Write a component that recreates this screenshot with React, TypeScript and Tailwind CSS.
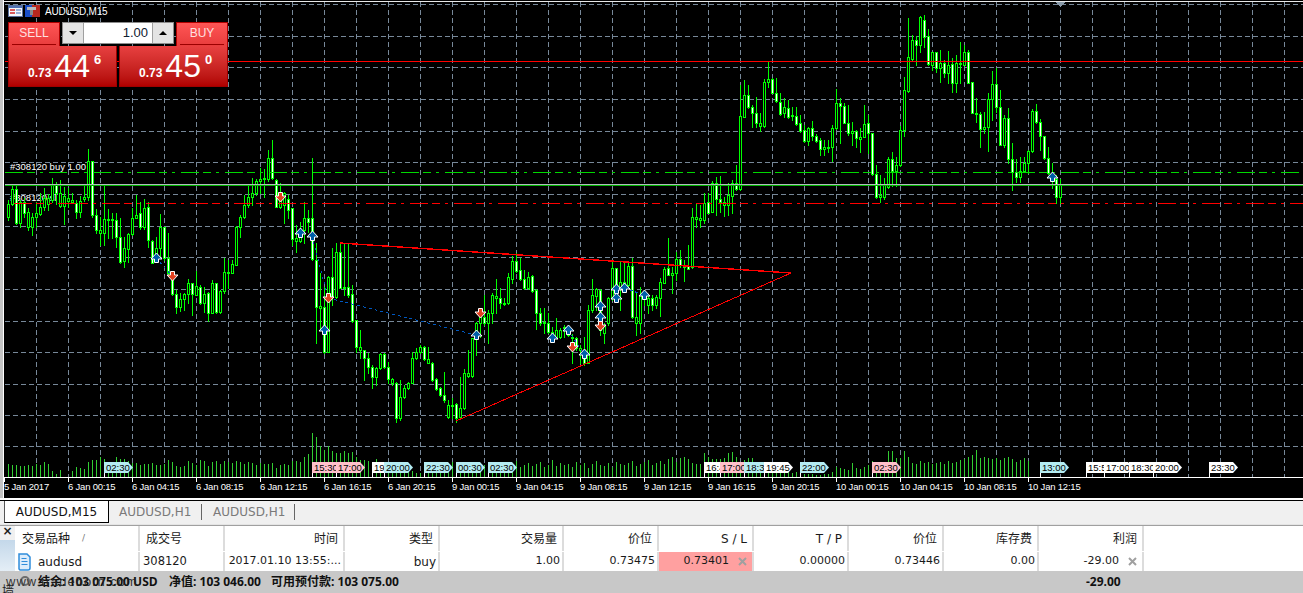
const bars: number[][] = [
  [200,204,217,220,0],[185,189,204,205,0],[185,189,223,224,1],[200,202,223,227,0],[198,202,213,217,1],[208,212,227,230,0],[213,217,227,235,0],[202,213,217,227,0],
  [193,207,214,215,0],[188,198,207,210,0],[194,198,204,210,0],[178,185,200,202,0],[182,185,193,204,1],[180,193,206,207,0],[187,196,206,224,0],[188,198,201,207,0],
  [193,200,202,203,0],[200,203,212,218,1],[196,201,212,217,0],[185,197,199,201,0],[149,161,197,200,0],[161,161,215,217,1],[209,215,230,233,1],[217,230,233,245,0],
  [186,219,233,245,0],[209,219,220,238,0],[213,219,220,238,0],[213,220,237,247,1],[218,237,262,263,1],[237,248,261,267,0],[233,234,249,262,0],[208,218,234,235,0],
  [195,215,218,218,0],[202,213,227,229,1],[199,208,227,229,0],[202,207,240,247,1],[240,241,263,263,1],[237,248,258,260,0],[214,227,248,258,0],[227,227,258,260,1],
  [233,258,273,274,1],[273,278,294,295,1],[290,294,307,313,1],[293,299,307,311,0],[293,294,299,310,0],[279,283,294,303,0],[283,283,294,315,1],[271,286,295,295,0],
  [285,287,303,304,1],[287,294,303,312,0],[292,293,313,321,1],[280,283,313,313,0],[283,283,312,313,1],[290,291,312,313,0],[258,272,291,293,0],[260,272,273,288,0],
  [260,264,273,273,0],[226,227,265,265,0],[215,217,227,237,0],[195,205,217,218,0],[185,197,205,207,0],[178,193,197,205,0],[179,181,193,195,0],[168,179,181,193,0],
  [169,178,179,197,0],[150,158,179,181,0],[140,158,178,179,1],[179,180,207,207,1],[183,198,207,208,0],[192,193,205,223,0],[195,199,210,218,1],[208,208,239,245,1],
  [225,238,241,252,0],[222,230,241,242,0],[202,218,230,243,0],[210,218,222,232,1],[158,218,259,260,1],[243,260,307,343,1],[273,306,308,330,0],[287,307,352,353,1],
  [276,277,352,352,0],[248,277,297,305,1],[243,252,297,298,0],[243,252,288,288,1],[243,287,288,295,0],[244,287,295,297,1],[285,294,321,322,1],[320,320,347,352,1],
  [330,347,350,358,0],[350,350,358,380,1],[353,358,367,373,1],[365,367,377,388,1],[367,368,377,385,0],[353,354,368,369,0],[353,354,367,368,1],[362,367,379,383,1],
  [378,379,383,385,0],[382,383,418,422,1],[380,397,418,420,0],[385,388,397,398,0],[382,383,388,389,0],[352,358,383,383,0],[348,352,358,359,0],[345,347,352,353,0],
  [346,347,359,360,1],[347,359,363,363,0],[362,363,380,381,1],[378,379,389,390,1],[387,388,395,396,1],[372,395,400,402,1],[400,405,417,418,0],[398,405,406,418,0],
  [403,404,418,422,1],[377,408,417,418,0],[369,373,408,409,0],[350,373,376,377,0],[338,338,376,377,0],[322,323,338,355,0],[310,317,323,337,0],[295,317,323,325,1],
  [310,313,323,343,0],[293,295,313,323,0],[279,296,298,313,0],[288,298,303,308,1],[298,303,304,305,0],[273,277,303,304,0],[256,261,279,283,0],[253,261,271,272,1],
  [258,270,279,280,1],[270,279,288,289,1],[272,277,288,289,0],[275,276,291,292,1],[289,290,313,329,1],[308,313,323,325,1],[308,322,323,333,0],[313,323,332,333,1],
  [327,332,333,342,0],[318,330,337,338,0],[328,330,337,338,0],[325,327,328,337,0],[327,327,335,336,1],[334,337,338,363,0],[337,338,348,350,1],[345,348,350,363,0],
  [337,350,363,365,1],[305,310,363,363,0],[279,295,310,312,0],[288,289,296,310,0],[289,290,330,335,1],[323,325,333,343,0],[297,298,323,325,0],[260,268,298,300,0],
  [268,268,287,302,1],[262,282,287,310,0],[262,282,287,290,1],[262,266,285,287,0],[258,266,317,318,1],[292,317,323,335,0],[287,295,323,333,0],[290,295,298,305,1],
  [295,298,305,313,0],[295,298,305,310,1],[295,297,305,308,0],[278,282,298,316,0],[267,269,283,283,0],[238,268,275,275,1],[267,273,275,293,0],[252,259,273,280,0],
  [250,259,265,267,1],[260,265,267,281,0],[245,266,269,268,1],[208,217,267,268,0],[204,217,219,227,0],[205,218,220,227,0],[193,203,220,223,0],[193,202,213,213,1],
  [181,183,212,212,0],[177,183,199,215,1],[176,199,202,212,1],[197,202,205,216,0],[183,195,205,215,0],[180,183,196,213,0],[165,183,189,190,1],[85,116,189,190,0],
  [80,95,117,117,0],[85,95,107,108,1],[105,107,113,127,1],[97,113,123,127,1],[113,123,126,131,0],[79,82,126,127,0],[62,79,82,87,0],[78,79,93,93,1],
  [78,93,101,102,1],[93,102,114,115,1],[98,107,113,117,0],[100,108,117,118,1],[107,115,116,120,0],[107,116,124,125,1],[115,123,131,132,1],[125,130,141,142,1],
  [127,128,141,145,0],[121,128,136,140,1],[134,136,141,142,1],[138,140,149,155,1],[140,147,149,155,0],[140,147,148,152,0],[125,128,147,161,0],[89,103,128,129,0],
  [98,103,106,143,1],[103,106,123,123,1],[105,123,133,135,1],[122,131,133,145,0],[130,131,138,147,1],[128,137,139,152,0],[105,124,137,137,0],[115,123,133,153,1],
  [133,133,174,175,1],[165,174,197,198,1],[175,195,197,202,0],[178,185,197,199,0],[157,159,187,188,0],[152,159,171,186,1],[157,165,171,186,0],[126,130,165,166,0],
  [77,90,130,136,0],[18,57,91,92,0],[35,40,59,60,0],[36,40,45,65,1],[16,17,45,52,0],[15,20,37,47,1],[29,36,64,65,1],[52,52,65,70,0],
  [52,52,68,72,1],[50,63,68,82,0],[60,63,73,77,1],[51,65,73,83,0],[58,64,83,92,1],[55,63,83,92,0],[42,63,64,83,0],[45,52,65,65,0],
  [50,52,83,83,1],[82,82,113,113,1],[98,113,114,122,0],[112,114,129,147,1],[112,127,129,133,0],[93,99,127,151,0],[71,84,99,120,0],[68,84,107,112,1],
  [90,107,145,145,1],[115,118,145,147,0],[108,118,159,163,1],[143,159,172,190,1],[159,172,177,182,1],[157,171,177,182,0],[157,163,171,172,0],[150,151,163,173,0],
  [109,111,151,152,0],[104,111,122,123,1],[119,122,136,150,1],[136,136,158,159,1],[147,158,173,174,1],[163,174,180,188,1],[175,179,197,203,1],[179,185,197,203,0],
]

const vols = [
  13,12,12,11,11,12,11,13,12,15,13,6,3,7,0,0,6,10,9,8,15,17,17,20,18,14,13,20,18,18,16,14,14,12,13,13,14,12,12,13,17,15,11,10,11,16,14,12,17,16,11,15,16,13,16,15,14,16,15,13,15,14,12,14,13,13,14,9,12,13,12,16,16,15,20,23,44,40,31,27,31,26,24,24,26,24,25,20,17,17,16,14,
  18,8,10,6,6,5,5,7,9,6,4,4,13,12,14,10,13,11,12,15,9,13,12,10,14,11,13,12,9,15,11,14,10,13,12,16,10,12,14,11,13,15,10,12,17,11,14,12,13,10,15,12,14,9,13,16,12,11,14,10,15,13,12,14,16,11,13,15,17,12,14,16,13,18,
  20,15,19,20,18,14,13,13,24,20,18,18,18,19,24,25,20,15,17,19,19,15,14,13,10,8,6,5,6,5,4,5,4,3,3,3,2,2,3,3,5,10,9,8,7,14,9,8,10,12,16,12,9,9,26,26,19,19,26,20,14,13,16,14,15,13,14,15,13,16,14,15,17,18,20,22,27,19,20,19,18,19,17,19,20,18,15,17,19,16,
]

const gridY = [4, 36, 67, 99, 131, 162, 194, 226, 257, 289, 321, 352, 384, 415, 446]
const gridX = Array.from({ length: 40 }, (_, i) => 36 + i * 32)

const axisLabels = [
  ['5 Jan 2017', 4], ['6 Jan 00:15', 68], ['6 Jan 04:15', 132], ['6 Jan 08:15', 196], ['6 Jan 12:15', 260], ['6 Jan 16:15', 324], ['6 Jan 20:15', 388],
  ['9 Jan 00:15', 452], ['9 Jan 04:15', 516], ['9 Jan 08:15', 580], ['9 Jan 12:15', 644], ['9 Jan 16:15', 708], ['9 Jan 20:15', 772],
  ['10 Jan 00:15', 836], ['10 Jan 04:15', 900], ['10 Jan 08:15', 964], ['10 Jan 12:15', 1028],
] as const

const CYAN = '#b4ecf2'
const PINK = '#ffc0cb'
const WHITE = '#ffffff'
const timeTags = [
  ['02:30', 104, CYAN], ['15:30', 312, PINK], ['17:00', 336, PINK], ['19:45', 372, WHITE], ['20:00', 384, CYAN], ['22:30', 424, CYAN], ['00:30', 456, CYAN], ['02:30', 488, CYAN],
  ['16:45', 704, WHITE], ['17:00', 720, PINK], ['18:30', 744, CYAN], ['19:45', 764, WHITE], ['22:00', 800, CYAN], ['02:30', 872, PINK], ['13:00', 1040, CYAN],
  ['15:55', 1086, WHITE], ['17:00', 1104, WHITE], ['18:30', 1129, WHITE], ['20:00', 1153, WHITE], ['23:30', 1209, WHITE],
] as const

const upMarks = [[156, 258], [300, 233], [312, 236], [324, 330], [476, 335], [552, 338], [568, 330], [584, 354], [600, 306], [600, 317], [616, 289], [616, 298], [624, 288], [644, 295], [1052, 177]]
const downMarks = [[172, 276], [280, 197], [328, 298], [480, 313], [572, 347], [600, 326]]

const dash = '18 4 8 5 3 6'
const chartFont = '"Liberation Sans", sans-serif'

function Chart() {
  return (
    <svg width="1299" height="498" viewBox="4 0 1299 498" className="block bg-black" shapeRendering="crispEdges">
      <rect x="4" y="1" width="1299" height="1" fill="#e8e8e8" />
      {gridY.map(y => (
        <line key={y} x1="5" x2="1303" y1={y + 0.5} y2={y + 0.5} stroke="#778899" strokeDasharray="5 3" />
      ))}
      {gridX.map(x => (
        <line key={x} x1={x + 0.5} x2={x + 0.5} y1="2" y2="477" stroke="#778899" strokeDasharray="5 3" />
      ))}
      <polygon points="1056,2 1065,2 1060.5,7" fill="#8899a8" />

      <text x="10" y="170" fill="#fff" fontSize="9.5" fontFamily={chartFont}>#308120 buy 1.00</text>
      <text x="10" y="201" fill="#fff" fontSize="9.5" fontFamily={chartFont}>#308120 sl</text>

      {vols.map((v, i) => (
        <rect key={i} x={8 + i * 4} y={477 - v} width="1" height={v} fill="#32cd32" />
      ))}

      {bars.map(([h, t, b, l, w], i) => {
        const x = 8 + i * 4
        return (
          <g key={i}>
            <rect x={x} y={h} width="1" height={l - h + 1} fill="#00ff00" />
            <rect x={x - 1} y={t} width="3" height={Math.max(b - t + 1, 2)} fill="#00ff00" />
            {b - t > 1 && <rect x={x} y={t + 1} width="1" height={b - t - 1} fill={w ? '#ffffff' : '#000000'} />}
          </g>
        )
      })}

      <rect x="5" y="61" width="1298" height="1" fill="#ff0000" />
      <line x1="5" x2="1303" y1="172.5" y2="172.5" stroke="#00d800" strokeDasharray={dash} />
      <rect x="5" y="184" width="1298" height="1" fill="#b0bcbc" />
      <rect x="5" y="185" width="1298" height="1" fill="#00b400" />
      <line x1="14" x2="1303" y1="203.5" y2="203.5" stroke="#ff0000" strokeDasharray={dash} />

      <line x1="328" y1="298" x2="476" y2="335" stroke="#0058c0" strokeDasharray="3 3" />
      <line x1="156" y1="258" x2="172" y2="276" stroke="#0058c0" strokeDasharray="2 4" />
      <line x1="312" y1="236" x2="328" y2="298" stroke="#0058c0" strokeDasharray="2 4" />
      <line x1="568" y1="330" x2="584" y2="354" stroke="#0058c0" strokeDasharray="2 4" />
      <line x1="624" y1="288" x2="644" y2="295" stroke="#0058c0" strokeDasharray="3 3" />

      <line x1="340" y1="243" x2="791" y2="273" stroke="#ff0000" strokeWidth="1.4" />
      <line x1="456" y1="421" x2="791" y2="273" stroke="#ff0000" />

      <g shapeRendering="auto">
        {upMarks.map(([x, y], i) => (
          <polygon key={i} points={`${x + 0.5},${y - 5} ${x + 6},${y + 1} ${x + 2.5},${y + 1} ${x + 2.5},${y + 4.5} ${x - 1.5},${y + 4.5} ${x - 1.5},${y + 1} ${x - 5},${y + 1}`} fill="#005ea8" stroke="#fff" strokeWidth="1" />
        ))}
        {downMarks.map(([x, y], i) => (
          <polygon key={i} points={`${x + 0.5},${y + 5} ${x + 6},${y - 1} ${x + 2.5},${y - 1} ${x + 2.5},${y - 4.5} ${x - 1.5},${y - 4.5} ${x - 1.5},${y - 1} ${x - 5},${y - 1}`} fill="#e2401f" stroke="#fff" strokeWidth="1" />
        ))}
      </g>

      <rect x="5" y="477" width="1298" height="1" fill="#ffffff" />
      {timeTags.map(([text, x, color], i) => (
        <g key={i}>
          <rect x={x} y="462" width="1" height="15" fill="#fff" />
          <polygon points={`${x},462 ${x + 24},462 ${x + 29},467.5 ${x + 24},473 ${x},473`} fill={color} shapeRendering="auto" />
          <text x={x + 2} y="471" fill="#000" fontSize="9.5" fontFamily={chartFont} shapeRendering="auto">{text}</text>
        </g>
      ))}

      {axisLabels.map(([text, x]) => (
        <g key={x}>
          <rect x={x} y="477" width="1" height="5" fill="#fff" />
          <text x={x} y="490" fill="#fff" fontSize="9.5" letterSpacing="-0.2" fontFamily={chartFont}>{text}</text>
        </g>
      ))}
    </svg>
  )
}

function TitleIcons() {
  return (
    <svg width="33" height="13" viewBox="0 0 33 13" className="block">
      <rect x="0.5" y="0.5" width="14" height="11" fill="#f4f6fa" stroke="#5a6f9a" />
      <rect x="1" y="1" width="13" height="2" fill="#4f6fb0" />
      <rect x="2" y="4" width="5" height="2" fill="#d85a5a" />
      <rect x="8" y="4" width="5" height="2" fill="#9ab0d8" />
      <rect x="2" y="7" width="5" height="2" fill="#d85a5a" />
      <rect x="8" y="7" width="5" height="2" fill="#9ab0d8" />
      <rect x="17" y="0" width="7" height="12" fill="#1a4fc8" />
      <rect x="24" y="0" width="8" height="12" fill="#b8281e" />
      <path d="M19 2h9v3h-9z" fill="#b8b8b8" />
      <path d="M22 5h3v5h-3z" fill="#8a8a8a" />
    </svg>
  )
}

function OrderPanel() {
  return (
    <div className="absolute left-[8px] top-[22px] w-[220px] font-['Liberation_Sans',sans-serif] text-white">
      <div className="flex h-[24px]">
        <div className="w-[52px] h-[24px] bg-gradient-to-b from-[#ff5555] to-[#e83c3c] border-t border-x border-[#b00000] flex flex-col items-center">
          <span className="text-[12px] leading-[21px] text-[#ffe0e0]">SELL</span>
          <span className="w-[44px] h-px bg-[#9c0000]" />
        </div>
        <div className="w-[112px] h-[22px] ml-[2px] flex border border-[#8c8c8c] bg-white text-black">
          <div className="w-[21px] bg-[#e4e4e4] border-r border-[#a0a0a0] flex items-center justify-center">
            <span className="w-0 h-0 border-x-[4px] border-x-transparent border-t-[4px] border-t-black" />
          </div>
          <div className="flex-1 text-right pr-[4px] text-[13px] leading-[20px] text-[#102030]">1.00</div>
          <div className="w-[21px] bg-[#e4e4e4] border-l border-[#a0a0a0] flex items-center justify-center">
            <span className="w-0 h-0 border-x-[4px] border-x-transparent border-b-[4px] border-b-black" />
          </div>
        </div>
        <div className="w-[52px] h-[24px] ml-[2px] bg-gradient-to-b from-[#ff5555] to-[#e83c3c] border-t border-x border-[#b00000] flex flex-col items-center">
          <span className="text-[12px] leading-[21px] text-[#ffe0e0]">BUY</span>
          <span className="w-[44px] h-px bg-[#9c0000]" />
        </div>
      </div>
      <div className="flex gap-[2px] h-[41px]">
        <PricePanel big="44" small="6" />
        <PricePanel big="45" small="0" />
      </div>
    </div>
  )
}

function PricePanel({ big, small }: { big: string; small: string }) {
  return (
    <div className="w-[109px] h-[41px] bg-gradient-to-b from-[#e84040] to-[#b00000] border-b border-x border-[#a00000] flex items-start pl-[19px]">
      <span className="text-[12px] font-bold mt-[20px] leading-[14px]">0.73</span>
      <span className="text-[32px] leading-[32px] mt-[4px] ml-[3px]">{big}</span>
      <span className="text-[13px] font-bold leading-[14px] mt-[7px] ml-[4px]">{small}</span>
    </div>
  )
}

function DocIcon() {
  return (
    <svg width="13" height="18" viewBox="0 0 13 18" className="block shrink-0">
      <path d="M1 1h8l3 3v11a2 2 0 0 1-2 2h-8l-1-1z" fill="#dcecfb" stroke="#2f8ddb" strokeWidth="1.5" />
      <path d="M3.5 5.5h5M3.5 8.5h6M3.5 11.5h6" stroke="#2f8ddb" />
    </svg>
  )
}

function XMark() {
  return (
    <svg width="9" height="9" viewBox="0 0 9 9" className="block">
      <path d="M1 1l7 7M8 1l-7 7" stroke="#a0a0a0" strokeWidth="2" />
    </svg>
  )
}

const cols = 'grid grid-cols-[124px_85px_120px_95px_124px_95px_95px_95px_95px_95px_105px]'
const cell = 'border-r-2 border-[#dcdcdc] h-full flex items-center justify-end'

const headers = ['成交号', '时间', '类型', '交易量', '价位', 'S / L', 'T / P', '价位', '库存费', '利润']

export default function App() {
  return (
    <div className="relative w-[1303px] h-[593px] overflow-hidden bg-[#f0f0f0] font-['DejaVu_Sans','Noto_Sans_CJK_SC',sans-serif] text-[11px] text-[#1a1a1a]">
      <div className="relative flex h-[498px]">
        <div className="w-[3px] bg-[#c4c4c4]" />
        <div className="w-px bg-white" />
        <Chart />
        <div className="absolute left-[8px] top-[5px] flex items-center">
          <TitleIcons />
          <span className="ml-[4px] text-white font-['Liberation_Sans',sans-serif] text-[10px] tracking-[-0.2px] leading-[13px]">AUDUSD,M15</span>
        </div>
        <OrderPanel />
      </div>

      <div className="h-[2px] bg-white" />
      <div className="h-[22px] border-t border-black flex pl-[4px] text-[12px]">
        <div className="w-[105px] h-[22px] bg-white border-l border-r border-b border-black border-l-[#555] flex items-center justify-center text-[#111]">AUDUSD,M15</div>
        <div className="w-[93px] h-[16px] mt-[3px] border-r border-[#666] flex items-center pl-[10px] text-[#7a7a7a]">AUDUSD,H1</div>
        <div className="w-[93px] h-[16px] mt-[3px] border-r border-[#666] flex items-center pl-[11px] text-[#7a7a7a]">AUDUSD,H1</div>
      </div>
      <div className="h-[3px] border-b border-[#e4e4e4]" />
      <div className="h-px bg-[#a0a0a0]" />

      <div className="flex h-[45px]">
        <div className="w-[15px] flex flex-col items-center">
          <span className="h-[14px] text-[12px] font-bold leading-[10px]">×</span>
          <div className="w-[15px] flex-1 bg-gradient-to-b from-[#c4d8ea] to-[#e4eef6]" />
        </div>
        <div className="flex-1 bg-white pl-px">
          <div className={`${cols} h-[25px] text-[12px]`}>
            <div className={`${cell} !justify-start pl-[6px] relative`}>
              交易品种
              <span className="absolute left-[66px] text-[9px] text-[#777]">/</span>
            </div>
            {headers.map((h, i) => (
              <div key={i} className={`${cell} pr-[5px] ${i === 0 ? '!justify-start pl-[6px]' : ''}`}>{h}</div>
            ))}
          </div>
          <div className={`${cols} h-[20px] pt-px`}>
            <div className={`${cell} !justify-start pl-[2px] gap-[7px]`}>
              <DocIcon />
              <span className="text-[12px]">audusd</span>
            </div>
            <div className={`${cell} !justify-start pl-[3px] text-[11.5px]`}>308120</div>
            <div className={`${cell} pr-[2px]`}>2017.01.10 13:55:...</div>
            <div className={`${cell} pr-[2px] text-[12px]`}>buy</div>
            <div className={`${cell} pr-[2px]`}>1.00</div>
            <div className={`${cell} pr-[2px]`}>0.73475</div>
            <div className={`${cell} bg-[#ffa0a0] pr-[5px] gap-[9px]`}>
              0.73401
              <XMark />
            </div>
            <div className={`${cell} pr-[2px]`}>0.00000</div>
            <div className={`${cell} pr-[2px]`}>0.73446</div>
            <div className={`${cell} pr-[2px]`}>0.00</div>
            <div className={`${cell} pr-[5px] gap-[9px]`}>
              -29.00
              <XMark />
            </div>
          </div>
        </div>
      </div>

      <div className="relative h-[22px] bg-[#c8c8c8] font-['Open_Sans','Noto_Sans_CJK_SC',sans-serif] font-bold text-[12px] leading-[22px] text-[#111] whitespace-pre">
        <span className="absolute left-[38px]">结余: 103 075.00 USD</span>
        <span className="absolute left-[169px]">净值: 103 046.00</span>
        <span className="absolute left-[271px]">可用预付款: 103 075.00</span>
        <span className="absolute left-[1086px]">-29.00</span>
        <span className="absolute left-[6px] font-normal text-[13px] tracking-[1px] text-[#222]/90 font-['Liberation_Sans',sans-serif]">www.tradeborn.com</span>
        <span className="absolute left-[20px] top-[5px] w-[10px] h-[10px] rounded-full border-2 border-[#444]/70" />
        <span className="absolute left-[2px] top-[14px] font-normal text-[12px] leading-[12px] text-[#222]">墙</span>
      </div>
    </div>
  )
}
